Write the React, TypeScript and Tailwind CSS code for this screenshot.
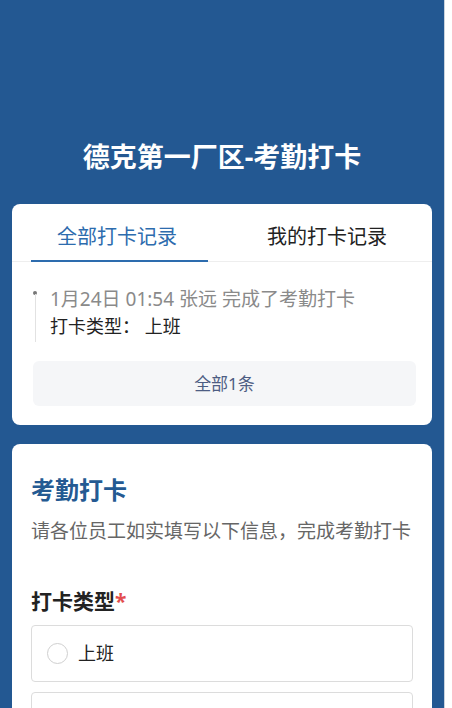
const font = { fontFamily: '"Noto Sans", "Noto Sans CJK SC", sans-serif' }

export default function App() {
  return (
    <div className="flex min-h-[708px] bg-white" style={font}>
      <div className="w-[444px] bg-[#235892] pb-10">
        {/* Header */}
        <h1 className="pt-[139px] text-center text-[27px] font-bold leading-[36px] text-white">
          德克第一厂区-考勤打卡
        </h1>

        {/* Records card */}
        <section className="mx-3 mt-[29px] rounded-lg bg-white pb-[19px]">
          <div className="flex h-[58px] border-b border-[#eeeeee]">
            <div className="flex flex-1 flex-col">
              <span className="flex-1 pt-[19px] text-center text-[20px] leading-[28px] text-[#2d6cae]">
                全部打卡记录
              </span>
              <span className="-mb-px ml-[19px] mr-[14px] h-[2px] bg-[#2d6cae]" />
            </div>
            <div className="flex flex-1 flex-col">
              <span className="flex-1 pt-[19px] text-center text-[20px] leading-[28px] text-[#222]">
                我的打卡记录
              </span>
            </div>
          </div>

          <div className="ml-[21px] mt-[24px] flex">
            <div className="relative w-[17px] shrink-0">
              <span className="absolute left-[0px] top-[5px] h-[4px] w-[4px] rounded-full bg-[#777]" />
              <span className="absolute left-[1.5px] top-[8px] h-[48px] w-px bg-[#e2e2e2]" />
            </div>
            <div className="leading-[27px]">
              <p className="text-[19px] text-[#8a8a8a]">1月24日 01:54 张远 完成了考勤打卡</p>
              <p className="text-[18px] text-[#222]">打卡类型：&nbsp;上班</p>
            </div>
          </div>

          <button className="mx-[21px] mt-[21px] flex h-[45px] w-[383px] items-center justify-center rounded-md bg-[#f5f6f8] text-[17px] text-[#4d5d83]">
            全部1条
          </button>
        </section>

        {/* Form card */}
        <section className="mx-3 mt-[19px] rounded-lg bg-white px-[19px] pb-6 pt-[30px]">
          <h2 className="text-[24px] font-bold leading-[32px] text-[#245a92]">考勤打卡</h2>
          <p className="mt-[11px] text-[19px] leading-[28px] text-[#666]">
            请各位员工如实填写以下信息，完成考勤打卡
          </p>
          <p className="mt-[42px] text-[21px] font-bold leading-[28px] text-[#222]">
            打卡类型<span className="text-[#e34d4d]">*</span>
          </p>
          <div className="mt-[10px] flex flex-col gap-[10px]">
            {['上班', '下班'].map((t) => (
              <label
                key={t}
                className="flex h-[57px] w-[382px] items-center gap-[10px] rounded border border-[#dcdcdc] px-[15px]"
              >
                <span className="h-[21px] w-[21px] rounded-full border border-[#cfcfcf]" />
                <span className="text-[18px] text-[#222]">{t}</span>
              </label>
            ))}
          </div>
        </section>
      </div>
      <div className="flex-1 border-l border-[#c9d3de] bg-white" />
    </div>
  )
}
